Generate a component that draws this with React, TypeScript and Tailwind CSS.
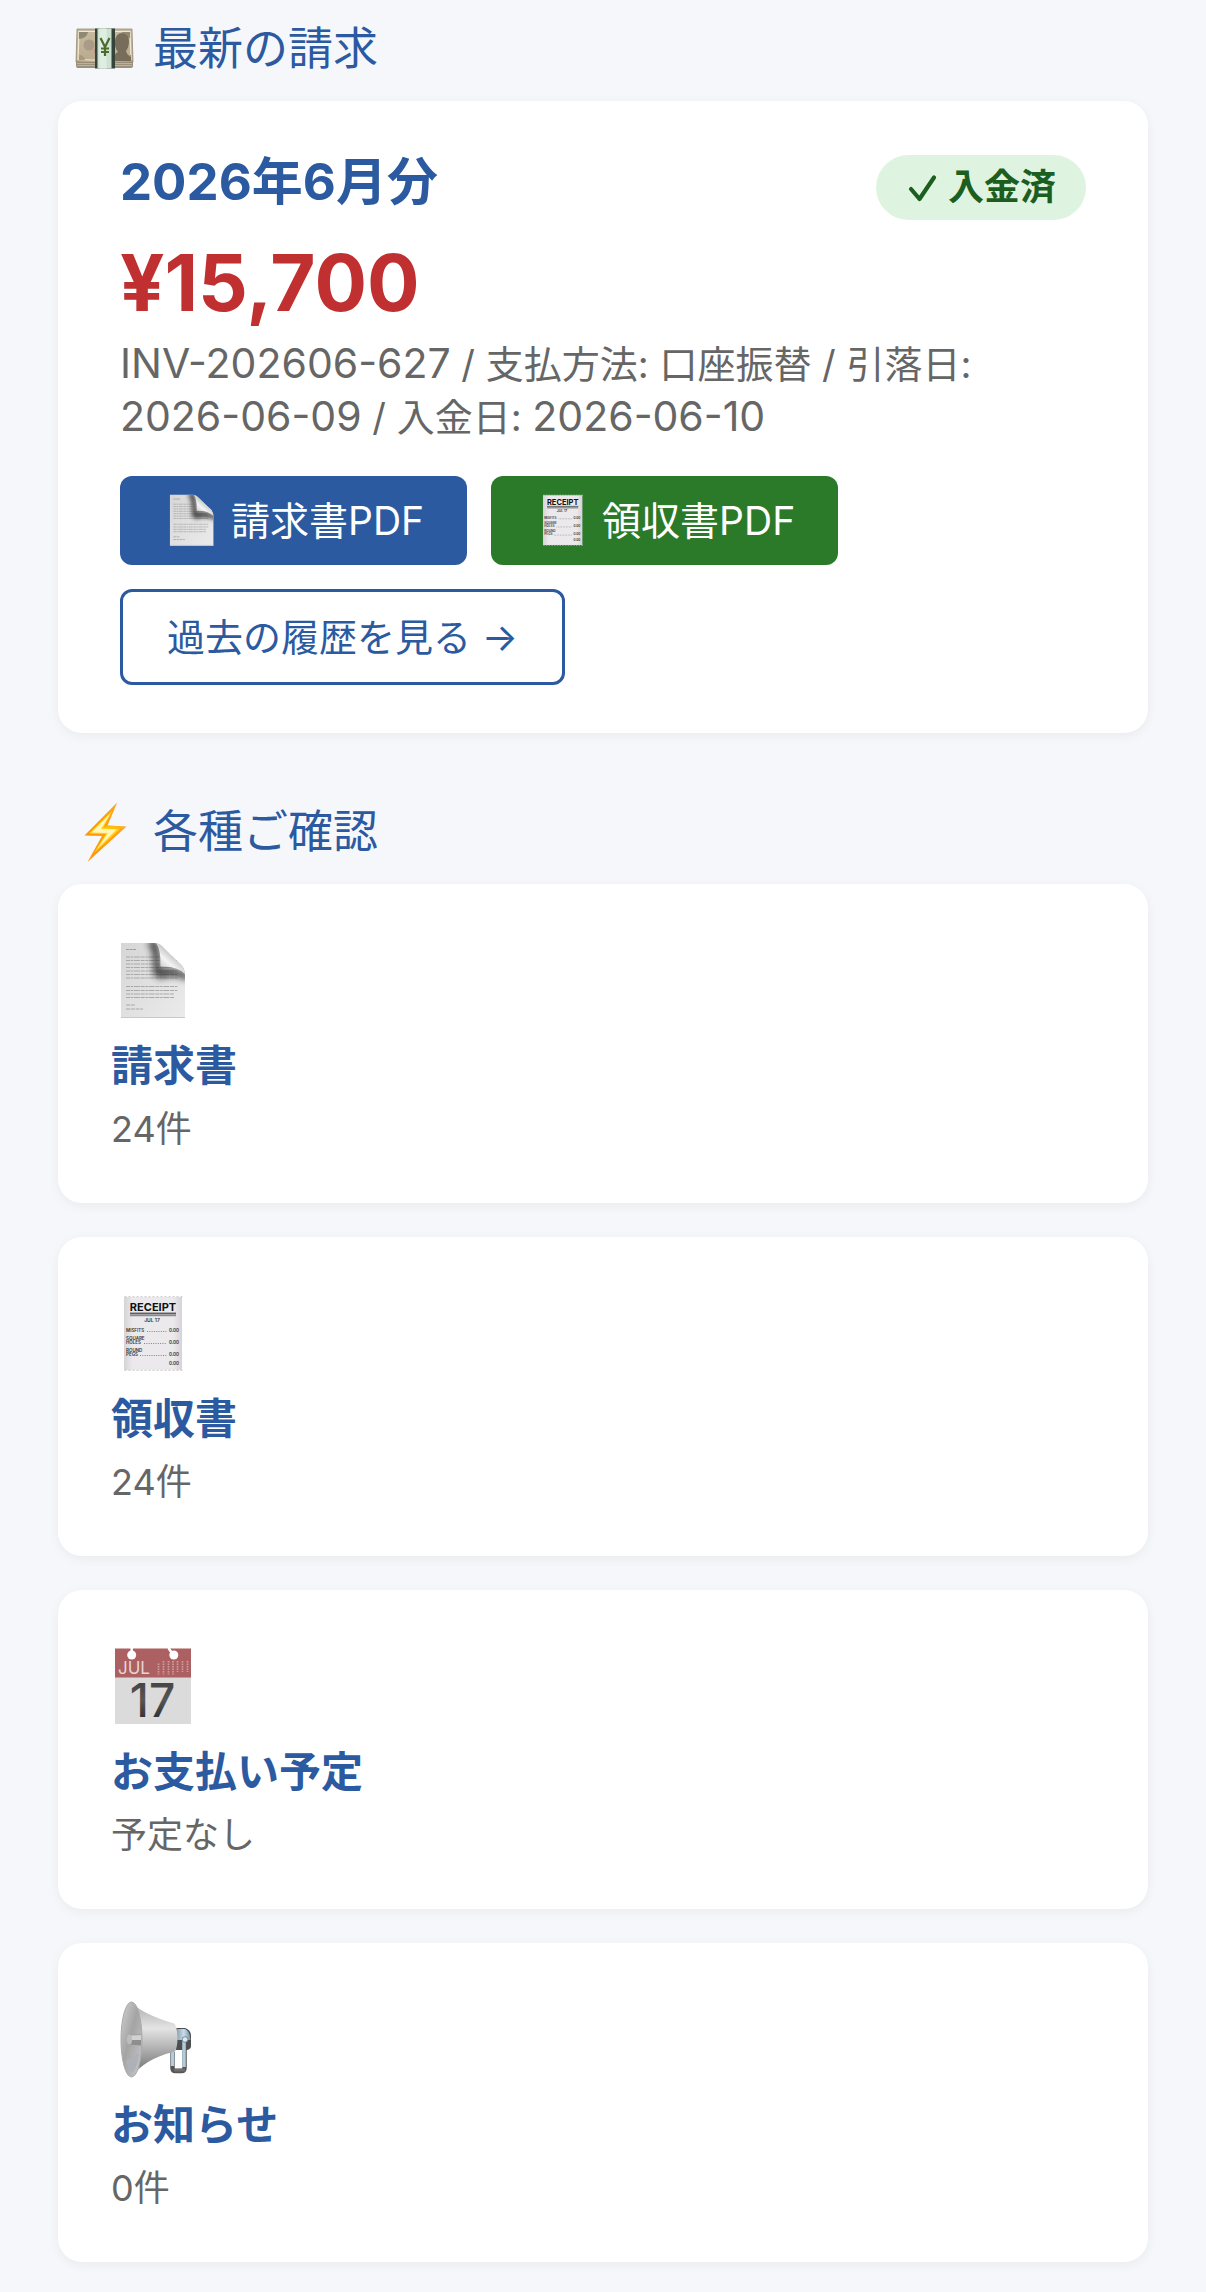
import React from 'react';

type IconProps = { className?: string };

const MoneyIcon: React.FC<IconProps> = ({ className }) => (
  <svg viewBox="0 0 60 60" className={className} aria-hidden="true">
    <defs>
      <linearGradient id="note" x1="0" y1="0" x2="0" y2="1">
        <stop offset="0" stopColor="#c6baa0" />
        <stop offset="1" stopColor="#b9a98c" />
      </linearGradient>
    </defs>
    <path d="M1 42h57v5q0 2-3 2h-51q-3 0-3-2z" fill="#9a917d" />
    <path d="M2 44.500h55M2 46.500h55" stroke="#c9c1ae" strokeWidth=".7" />
    <path d="M2 10h55l1 33q-28 2-57 0z" fill="url(#note)" stroke="#8b8068" strokeWidth=".7" />
    <path d="M4 12.500h51l1 28q-26 1.500-53 0z" fill="none" stroke="#f0e8cf" strokeWidth="1.200" />
    <path d="M4 13h9q-1 6-9 7zM55 13h-8q1 5 8 6z" fill="#8f8872" />
    <path d="M4 36q5 0 6 5h-6zM56 36q-5 0-6 5h6z" fill="#a39a80" />
    <circle cx="14" cy="26" r="5.500" fill="#aa9a88" />
    <path d="M20 35q-3-6 2-6v10z" fill="#c98b7c" />
    <path d="M39 42q0-8 4-9-4-5-3-11 1-8 7-8 7 1 7 8 0 6-3 10 1 4 5 6v4z" fill="#786d5b" />
    <rect x="20" y="9.500" width="20" height="40" fill="#34443a" />
    <rect x="22.500" y="9.500" width="14" height="40" fill="#cfe2d2" />
    <rect x="24.500" y="9.500" width="7" height="40" fill="#deeee0" />
    <path d="M25.500 19l4.500 9 4.500-9M30 28v9M26 29.500h8M26 33h8" fill="none" stroke="#4c6b2b" strokeWidth="2.200" />
  </svg>
);

const BoltIcon: React.FC<IconProps> = ({ className }) => (
  <svg viewBox="0 0 60 60" className={className} aria-hidden="true">
    <defs>
      <linearGradient id="bolt" x1="0" y1="0" x2="1" y2="0">
        <stop offset="0" stopColor="#ff9407" />
        <stop offset="1" stopColor="#ffa51c" />
      </linearGradient>
    </defs>
    <path d="M42.200 .5L9.500 33.500l17.500 .5L12.500 60 51.500 24.500 32.500 23.500z" fill="url(#bolt)" />
    <path d="M37.500 8.500L14 31.500l17 .5L19 51 45.500 26.500 28.500 25.500z" fill="#ffd51c" />
    <path d="M35.500 11.500L16.500 30.500l16.500 .5L22 47 41.500 27.500 26 27z" fill="#fff7b8" />
    <path d="M27 26l5.500-2.500 17 1.500-6 2z" fill="#ffbd0c" />
  </svg>
);

const CheckIcon: React.FC<IconProps> = ({ className }) => (
  <svg viewBox="0 0 32 32" className={className} aria-hidden="true">
    <path
      d="M5 17l8.500 10L28 5.500"
      fill="none"
      stroke="currentColor"
      strokeWidth="4.200"
      strokeLinecap="round"
      strokeLinejoin="round"
    />
  </svg>
);

const letterLines = [15, 18.5, 22, 25.5, 29, 32.5, 36, 44.5, 48.5, 52, 55.5];

const DocumentIcon: React.FC<IconProps> = ({ className }) => (
  <svg viewBox="0 0 82 78" className={className} aria-hidden="true">
    <defs>
      <linearGradient id="sheet" x1="0" y1="0" x2="1" y2="1">
        <stop offset="0" stopColor="#d6d6d6" />
        <stop offset="1" stopColor="#ebebeb" />
      </linearGradient>
      <linearGradient id="curl" x1="62" y1="12" x2="48" y2="28" gradientUnits="userSpaceOnUse">
        <stop offset="0" stopColor="#c2c2c2" />
        <stop offset="0.450" stopColor="#f4f4f4" />
        <stop offset="1" stopColor="#bdbdbd" />
      </linearGradient>
      <filter id="soft" x="-50%" y="-50%" width="200%" height="200%">
        <feGaussianBlur stdDeviation="3.200" />
      </filter>
      <clipPath id="sheetClip">
        <path d="M10 1h34q6 1 9 6l18 16q3 4 3 9v44h-64z" />
      </clipPath>
    </defs>
    <path d="M10 1h34q6 1 9 6l18 16q3 4 3 9v44h-64z" fill="url(#sheet)" />
    <g clipPath="url(#sheetClip)">
      <path d="M15 7.500h10" stroke="#9d9d9d" strokeWidth="1.200" strokeDasharray="3 .6" />
      {letterLines.map((y) => (
        <path key={y} d={`M15 ${y}h${y > 50 ? 48 : 52}`} stroke="#a9a9a9" strokeWidth="1.100" strokeDasharray="4 .7 2.500 .7 6 .8" />
      ))}
      <path d="M15 63h9M15 67h17" stroke="#a8a8a8" strokeWidth="1.200" strokeDasharray="4 .8" />
      <path d="M44-2q5 8 4 29 18-1 30 7l-2 3q-14-6-27-1l-6-4q2-19-5-31z" fill="#333333" stroke="#333333" strokeWidth="2" opacity=".85" filter="url(#soft)" />
    </g>
    <path d="M45 1q5 6 4.500 23.500Q67 24 74 32q-1-6-4-9L53 6q-3-4-8-5z" fill="url(#curl)" />
    <path d="M10 75.500h64" stroke="#c9c9c9" />
  </svg>
);

const ReceiptIcon: React.FC<IconProps> = ({ className }) => (
  <svg viewBox="0 0 82 78" className={className} aria-hidden="true">
    <defs>
      <linearGradient id="roll" x1="0" y1="0" x2="1" y2="0">
        <stop offset="0" stopColor="#d5d3d6" />
        <stop offset="0.150" stopColor="#ebe9ec" />
        <stop offset="0.850" stopColor="#ebe9ec" />
        <stop offset="1" stopColor="#d5d3d6" />
      </linearGradient>
    </defs>
    <path d="M13 2h58v73h-58z" fill="url(#roll)" />
    <path d="M13.500 1.700h58M13.500 75.300h58" stroke="#d3d1d4" strokeWidth="1.200" strokeDasharray="2 2" />
    <g fontFamily="Inter, sans-serif" fontWeight="600" fill="#333333">
      <text x="42" y="15.500" fontSize="11" fontWeight="700" textAnchor="middle" fill="#111111">RECEIPT</text>
      <text x="41" y="27" fontSize="5" textAnchor="middle">JUL 17</text>
      <text x="15" y="37" fontSize="4.500">MISFITS</text>
      <text x="15" y="44.500" fontSize="4.500">SQUARE</text>
      <text x="15" y="49" fontSize="4.500">HOLES</text>
      <text x="15" y="56.500" fontSize="4.500">ROUND</text>
      <text x="15" y="61" fontSize="4.500">PEGS</text>
      <text x="68" y="37" fontSize="4.500" textAnchor="end">0.00</text>
      <text x="68" y="49" fontSize="4.500" textAnchor="end">0.00</text>
      <text x="68" y="61" fontSize="4.500" textAnchor="end">0.00</text>
      <text x="68" y="69.500" fontSize="4.500" textAnchor="end">0.00</text>
    </g>
    <path d="M19 18.200h46" stroke="#222222" strokeWidth="1" />
    <path d="M19 20.300h46" stroke="#8b8b8d" strokeWidth="2" />
    <path d="M36 36.500h20M33 48.500h23M29 60.500h27" stroke="#777777" strokeWidth=".9" strokeDasharray="1 1.300" />
  </svg>
);

const CalendarIcon: React.FC<IconProps> = ({ className }) => (
  <svg viewBox="0 0 82 78" className={`overflow-visible ${className}`} aria-hidden="true">
    <defs>
      <linearGradient id="dayInk" x1="0" y1="0" x2="0" y2="1">
        <stop offset="0" stopColor="#3c3c3c" />
        <stop offset="0.500" stopColor="#555555" />
        <stop offset="1" stopColor="#1e1e1e" />
      </linearGradient>
    </defs>
    <path d="M4 29h76v47h-76z" fill="#dbdbdb" />
    <path d="M4 .5h76v29h-76z" fill="#ac6061" />
    <path d="M20.700 0v7M57.500 0l4 6" stroke="#ffffff" strokeWidth="2.500" />
    <circle cx="20.700" cy="7" r="4.500" fill="#ffffff" />
    <circle cx="62.800" cy="7" r="4.500" fill="#ffffff" />
    <text x="7" y="26" fontFamily="Inter, sans-serif" fontSize="17" fill="#e6d5d5">JUL</text>
    <g stroke="#cf9fa0" strokeWidth="1.700" strokeDasharray="1.500 1">
      <path d="M47.500 15.500v11M52.500 13v13.500M57.500 13v13.500M62 13v13.500M66.500 13v11M71.500 13v11M76.500 13v11" />
    </g>
    <text x="41.500" y="69" fontFamily="Inter, sans-serif" fontSize="46" fontWeight="500" textAnchor="middle" fill="url(#dayInk)">17</text>
  </svg>
);

const MegaphoneIcon: React.FC<IconProps> = ({ className }) => (
  <svg viewBox="0 0 82 78" className={className} aria-hidden="true">
    <defs>
      <linearGradient id="horn" x1="0" y1="0" x2="0" y2="1">
        <stop offset="0" stopColor="#a8a8a8" />
        <stop offset="0.350" stopColor="#e4e4e4" />
        <stop offset="0.600" stopColor="#b5b5b5" />
        <stop offset="0.850" stopColor="#848484" />
        <stop offset="1" stopColor="#d0d0d0" />
      </linearGradient>
      <linearGradient id="mouth" x1="0" y1="0" x2="1" y2="1">
        <stop offset="0" stopColor="#d2d2d2" />
        <stop offset="0.450" stopColor="#a4a4a4" />
        <stop offset="1" stopColor="#c9cacc" />
      </linearGradient>
      <linearGradient id="metal" x1="0" y1="0" x2="1" y2="0">
        <stop offset="0" stopColor="#8ba0b0" />
        <stop offset="0.500" stopColor="#c9dded" />
        <stop offset="1" stopColor="#7d8f9d" />
      </linearGradient>
    </defs>
    <path d="M65 27h9q6 2 6 8v10q0 3-4 4H65z" fill="#4c4f52" />
    <path d="M66 28h8q5 2 5.500 11H66z" fill="url(#metal)" />
    <path d="M61.500 51v16q0 3 3 3h6q3 0 3-3V36" fill="none" stroke="#555555" strokeWidth="4.500" />
    <path d="M61.500 51v14M73 36v30" fill="none" stroke="#b4cbdc" strokeWidth="3.500" />
    <path d="M63 69h11" stroke="#6f6f6f" strokeWidth="3" />
    <path d="M20 1q11 12 43 21.500Q66 24 66.500 37q0 9-2.500 13.500Q33 58 21 76z" fill="url(#horn)" />
    <ellipse cx="20.500" cy="38.500" rx="10.500" ry="37.500" fill="url(#mouth)" stroke="#aaaaaa" />
    <path d="M15 60l13-8q-1 10-5 18-5 3-8-10z" fill="#aeb1b7" />
    <path d="M18 34l12-.5v11L18 43.500z" fill="#8e8e8e" />
    <path d="M18 34.500l12-.5v5H18z" fill="#d2d2d2" />
    <ellipse cx="18.500" cy="38.500" rx="2.500" ry="5" fill="#bdbdbd" />
    <circle cx="74" cy="38.500" r="2.800" fill="#dbe8f2" stroke="#6e7f8c" strokeWidth=".8" />
  </svg>
);

const quickLinks = [
  { title: '請求書', note: '24件', Icon: DocumentIcon },
  { title: '領収書', note: '24件', Icon: ReceiptIcon },
  { title: 'お支払い予定', note: '予定なし', Icon: CalendarIcon },
  { title: 'お知らせ', note: '0件', Icon: MegaphoneIcon },
];

const SectionTitle: React.FC<{ icon: React.ReactNode; children: React.ReactNode }> = ({ icon, children }) => (
  <h2 className="mb-[19px] flex items-center gap-[18px] px-[17px] text-[45px] leading-[66px] text-[#2c5aa0]">
    {icon}
    {children}
  </h2>
);

// invoice numbers and dates never break at their hyphens
const Code: React.FC<{ children: React.ReactNode }> = ({ children }) => (
  <span className="text-[41px] whitespace-nowrap">{children}</span>
);

const App: React.FC = () => {
  return (
    <main
      lang="ja"
      className="min-h-screen bg-[#f5f7fb] px-[58px] pt-4 pb-[30px] font-['Inter','Noto_Sans_CJK_JP',sans-serif]"
    >
      <section>
        <SectionTitle icon={<MoneyIcon className="size-[60px]" />}>最新の請求</SectionTitle>

        <div className="rounded-3xl bg-white px-[62px] pt-[54px] pb-12 shadow-[0_3px_12px_rgba(0,0,0,0.05)]">
          <div className="flex items-start justify-between">
            <h3 className="text-[51px] leading-[54px] font-bold text-[#2c5aa0]">2026年6月分</h3>
            <span className="flex items-center gap-2.5 rounded-full bg-[#dff4e0] px-[30px] text-[36px] leading-[65px] font-bold text-[#1b5e20]">
              <CheckIcon className="size-8" />
              入金済
            </span>
          </div>
          <p className="mt-[25px] text-[78px] leading-[76px] font-bold text-[#c03030]">¥15,700</p>
          <p className="mt-4 text-[38px] leading-[52px] text-[#666666]">
            <Code>INV-202606-627</Code> / 支払方法: 口座振替 / 引落日: <Code>2026-06-09</Code> / 入金日: <Code>2026-06-10</Code>
          </p>

          <div className="mt-[33px] flex flex-wrap gap-6">
            <a
              href="#invoice"
              className="flex h-[89px] items-center gap-3 rounded-xl bg-[#2c5aa0] px-[43px] text-[39px] leading-[52px] text-white"
            >
              <DocumentIcon className="h-[53px] w-14" />
              請求書PDF
            </a>
            <a
              href="#receipt"
              className="flex h-[89px] items-center gap-3 rounded-xl bg-[#2a7a2a] px-[43px] text-[39px] leading-[52px] text-white"
            >
              <ReceiptIcon className="h-[53px] w-14" />
              領収書PDF
            </a>
            <a
              href="#history"
              className="flex h-24 items-center rounded-xl border-3 border-[#2c5aa0] bg-white px-11 text-[38px] leading-[52px] text-[#2c5aa0]"
            >
              過去の履歴を見る →
            </a>
          </div>
        </div>
      </section>

      <section className="mt-[66px]">
        <SectionTitle icon={<BoltIcon className="size-[60px]" />}>各種ご確認</SectionTitle>

        <div className="flex flex-col gap-[34px]">
          {quickLinks.map(({ title, note, Icon }) => (
            <a
              key={title}
              href={`#${title}`}
              className="block rounded-3xl bg-white px-[53px] pt-[58px] pb-[50px] shadow-[0_3px_12px_rgba(0,0,0,0.05)]"
            >
              <Icon className="h-[78px] w-[82px]" />
              <h3 className="mt-4 text-[42px] leading-[60px] font-bold text-[#2c5aa0]">{title}</h3>
              <p className="mt-[9px] text-[36px] leading-[48px] text-[#666666]">{note}</p>
            </a>
          ))}
        </div>
      </section>
    </main>
  );
};

export default App;
